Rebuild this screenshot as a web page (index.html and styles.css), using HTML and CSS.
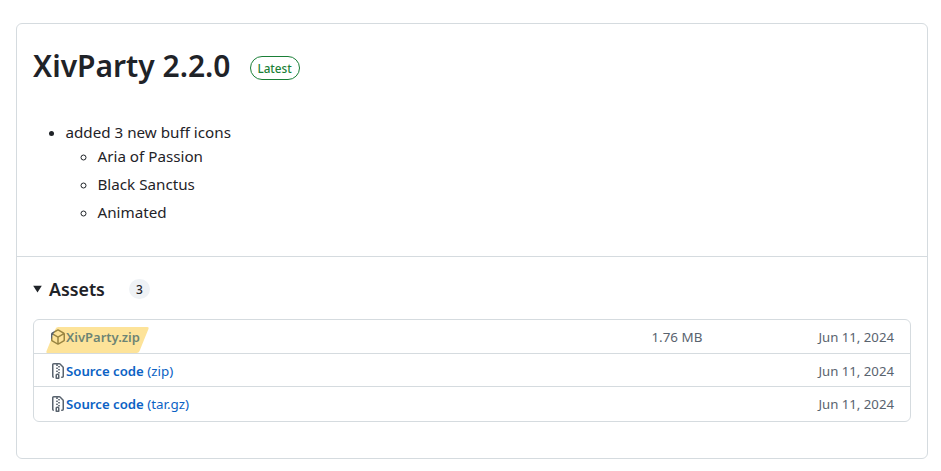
FILE: index.html
```html
<!DOCTYPE html>
<html lang="en">
<head>
<meta charset="utf-8">
<title>XivParty 2.2.0</title>
<link rel="stylesheet" href="styles.css">
</head>
<body>
<section class="card">
  <div class="release">
    <div class="title-row">
      <h1 class="title">XivParty 2.2.0</h1>
      <span class="label">Latest</span>
    </div>
    <ul class="notes">
      <li>added 3 new buff icons
        <ul class="subnotes">
          <li>Aria of Passion</li>
          <li>Black Sanctus</li>
          <li>Animated</li>
        </ul>
      </li>
    </ul>
  </div>
  <div class="assets">
    <div class="assets-head">
      <svg class="caret" viewBox="0 0 10 8" aria-hidden="true"><path d="M0.2 0.4h9.6L5 7.8z"/></svg>
      <h2 class="assets-title">Assets</h2>
      <span class="counter">3</span>
    </div>
    <ul class="asset-list">
      <li class="asset asset-first">
        <span class="asset-name">
          <svg class="icon" viewBox="0 0 16 16" aria-hidden="true"><path d="m8.878.392 5.25 3.045c.54.314.872.89.872 1.514v6.098a1.75 1.75 0 0 1-.872 1.514l-5.25 3.045a1.75 1.75 0 0 1-1.756 0l-5.25-3.045A1.75 1.75 0 0 1 1 11.049V4.951c0-.624.332-1.201.872-1.514L7.122.392a1.75 1.75 0 0 1 1.756 0ZM7.875 1.69l-4.63 2.685L8 7.133l4.755-2.758-4.63-2.685a.248.248 0 0 0-.25 0ZM2.5 5.677v5.372c0 .09.047.171.125.216l4.625 2.683V8.432Zm6.25 8.271 4.625-2.683a.25.25 0 0 0 .125-.216V5.677L8.75 8.432Z"/></svg>
          <a class="asset-link" href="#"><b class="strong strong-file">XivParty.zip</b></a>
        </span>
        <span class="size">1.76 MB</span>
        <span class="date">Jun 11, 2024</span>
        <span class="highlight"></span>
      </li>
      <li class="asset asset-mid">
        <span class="asset-name">
          <svg class="icon" viewBox="0 0 16 16" aria-hidden="true"><path d="M3.5 1.75v11.5c0 .09.048.173.126.217a.75.75 0 0 1-.752 1.298A1.748 1.748 0 0 1 2 13.25V1.75C2 .784 2.784 0 3.75 0h5.586c.464 0 .909.185 1.237.513l2.914 2.914c.329.328.513.773.513 1.237v8.586A1.75 1.75 0 0 1 12.25 15h-.5a.75.75 0 0 1 0-1.5h.5a.25.25 0 0 0 .25-.25V4.664a.25.25 0 0 0-.073-.177L9.513 1.573a.25.25 0 0 0-.177-.073H7.25a.75.75 0 0 1 0 1.5h-.5a.75.75 0 0 1 0-1.5h-3a.25.25 0 0 0-.25.25Zm3.75 8.75h.5c.966 0 1.75.784 1.75 1.75v3a.75.75 0 0 1-.75.75h-2.5a.75.75 0 0 1-.75-.75v-3c0-.966.784-1.75 1.75-1.75ZM6 5.25a.75.75 0 0 1 .75-.75h.5a.75.75 0 0 1 0 1.5h-.5A.75.75 0 0 1 6 5.25Zm.75 2.25h.5a.75.75 0 0 1 0 1.5h-.5a.75.75 0 0 1 0-1.5ZM8 6.75A.75.75 0 0 1 8.75 6h.5a.75.75 0 0 1 0 1.5h-.5A.75.75 0 0 1 8 6.75ZM8.75 3h.5a.75.75 0 0 1 0 1.5h-.5a.75.75 0 0 1 0-1.5ZM8 9.75A.75.75 0 0 1 8.75 9h.5a.75.75 0 0 1 0 1.5h-.5A.75.75 0 0 1 8 9.75Zm-1 2.5v2.25h1v-2.25a.25.25 0 0 0-.25-.25h-.5a.25.25 0 0 0-.25.25Z"/></svg>
          <a class="asset-link" href="#"><b class="strong">Source code</b> (zip)</a>
        </span>
        <span class="date">Jun 11, 2024</span>
      </li>
      <li class="asset asset-last">
        <span class="asset-name">
          <svg class="icon" viewBox="0 0 16 16" aria-hidden="true"><path d="M3.5 1.75v11.5c0 .09.048.173.126.217a.75.75 0 0 1-.752 1.298A1.748 1.748 0 0 1 2 13.25V1.75C2 .784 2.784 0 3.75 0h5.586c.464 0 .909.185 1.237.513l2.914 2.914c.329.328.513.773.513 1.237v8.586A1.75 1.75 0 0 1 12.25 15h-.5a.75.75 0 0 1 0-1.5h.5a.25.25 0 0 0 .25-.25V4.664a.25.25 0 0 0-.073-.177L9.513 1.573a.25.25 0 0 0-.177-.073H7.25a.75.75 0 0 1 0 1.5h-.5a.75.75 0 0 1 0-1.5h-3a.25.25 0 0 0-.25.25Zm3.75 8.75h.5c.966 0 1.75.784 1.75 1.75v3a.75.75 0 0 1-.75.75h-2.5a.75.75 0 0 1-.75-.75v-3c0-.966.784-1.75 1.75-1.75ZM6 5.25a.75.75 0 0 1 .75-.75h.5a.75.75 0 0 1 0 1.5h-.5A.75.75 0 0 1 6 5.25Zm.75 2.25h.5a.75.75 0 0 1 0 1.5h-.5a.75.75 0 0 1 0-1.5ZM8 6.75A.75.75 0 0 1 8.75 6h.5a.75.75 0 0 1 0 1.5h-.5A.75.75 0 0 1 8 6.75ZM8.75 3h.5a.75.75 0 0 1 0 1.5h-.5a.75.75 0 0 1 0-1.5ZM8 9.75A.75.75 0 0 1 8.75 9h.5a.75.75 0 0 1 0 1.5h-.5A.75.75 0 0 1 8 9.75Zm-1 2.5v2.25h1v-2.25a.25.25 0 0 0-.25-.25h-.5a.25.25 0 0 0-.25.25Z"/></svg>
          <a class="asset-link" href="#"><b class="strong">Source code</b> (tar.gz)</a>
        </span>
        <span class="date">Jun 11, 2024</span>
      </li>
    </ul>
  </div>
</section>
</body>
</html>
```

FILE: styles.css
```css
* { box-sizing: border-box; }
html, body { margin: 0; padding: 0; background: #fff; }
body {
  padding: 23px 13px 0 16px;
  color: #1f2328;
  font-family: "Noto Sans", "Open Sans", sans-serif;
  font-size: 15.2px;
}
.card {
  height: 436px;
  border: 1px solid #d5dbdf;
  border-radius: 6px;
  overflow: hidden;
}
.release {
  height: 233px;
  padding: 15px 16px 0;
  border-bottom: 1px solid #d5dbdf;
}
.title-row { display: flex; align-items: center; gap: 19px; height: 54px; }
.title { margin: 0; font-size: 30px; font-weight: 600; line-height: 54px; }
.label {
  width: 50px; height: 24px;
  display: flex; align-items: center; justify-content: center;
  border: 1px solid #1a7f37;
  border-radius: 12px;
  color: #1a7f37;
  font-size: 11.7px;
  font-weight: 500;
  margin-top: 4px;
}
.notes { margin: 27px 0 0; padding: 0 0 0 32.5px; line-height: 24px; }
.subnotes { margin: 0; padding: 0 0 0 32px; list-style: circle; }
.subnotes li { margin-bottom: 4px; }
.assets { padding: 19px 16px 0; }
.assets-head { display: flex; align-items: center; height: 26px; margin-bottom: 17px; }
.caret { width: 9px; height: 8px; fill: #1f2328; margin-right: 7px; flex: none; }
.assets-title { margin: 0; font-size: 17.8px; font-weight: 600; line-height: 26px; }
.counter {
  margin-left: 24px;
  width: 21px; height: 20px;
  border-radius: 10px;
  background: #eff2f5;
  display: flex; align-items: center; justify-content: center;
  font-size: 12px;
  font-weight: 500;
}
.asset-list {
  margin: 0; padding: 0; list-style: none;
  border: 1px solid #d5dbdf;
  border-radius: 6px;
  overflow: hidden;
}
.asset {
  position: relative;
  display: flex;
  align-items: center;
  height: 33px;
  padding: 0 16px 0 16px;
  border-bottom: 1px solid #d5dbdf;
  font-size: 13.4px;
  color: #59636e;
}
.asset-first { height: 34px; }
.asset-mid { padding-top: 1px; }
.asset-last { height: 34px; border-bottom: 0; }
.asset-name { flex: 1; display: flex; align-items: center; }
.icon { width: 16px; height: 16px; fill: #59636e; flex: none; }
.asset-link { color: #0b62c4; text-decoration: none; }
.strong { font-size: 13.2px; font-weight: 600; }
.strong-file { font-size: 13px; }
.size { width: 167px; }
.date { text-align: right; font-size: 13.2px; }
.highlight {
  position: absolute;
  left: 17px; top: 7px;
  width: 93px; height: 26px;
  background: rgba(250, 185, 0, .4);
  transform: skewX(-22deg);
  border-radius: 2px;
}
```
